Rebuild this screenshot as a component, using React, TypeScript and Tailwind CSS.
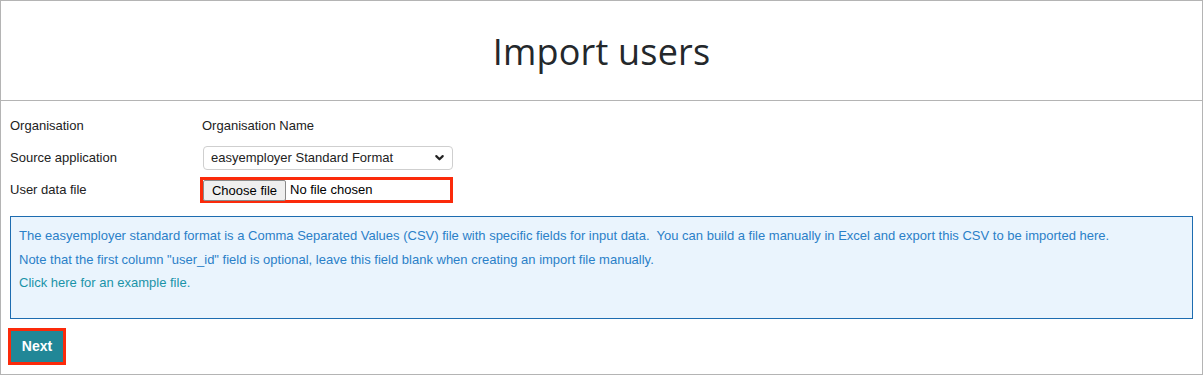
import React from 'react';

const sans = { fontFamily: '"Liberation Sans", Arial, sans-serif' };

function ChevronDown() {
  return (
    <svg width="11" height="11" viewBox="0 0 12 12" fill="none" stroke="#222" strokeWidth="2.4" strokeLinecap="round" strokeLinejoin="round">
      <path d="M2.5 4.5 6 8l3.5-3.5" />
    </svg>
  );
}

export default function App() {
  return (
    <div className="bg-white w-[1204px] h-[376px]">
      <div className="w-[1203px] h-[375px] border border-[#b4b4b4] flex flex-col text-[13px] text-[#222]" style={sans}>
        {/* Page heading */}
        <header className="h-[100px] shrink-0 border-b border-[#b4b4b4] flex items-center justify-center">
          <h1 className="text-[36px] text-[#24282b] font-['Open_Sans',sans-serif] font-normal tracking-[0.2px] pt-[3px]">
            Import users
          </h1>
        </header>

        {/* Form */}
        <div className="px-[9px] pt-[9px]">
          <div className="flex items-center h-[32px]">
            <div className="w-[192px]">Organisation</div>
            <div>Organisation Name</div>
          </div>
          <div className="flex items-center h-[31px]">
            <div className="w-[192px]">Source application</div>
            <div className="w-[250px] h-[24px] ml-[1px] border border-[#cfcfcf] rounded-[4px] flex items-center justify-between pl-[7px] pr-[7px]">
              <span>easyemployer Standard Format</span>
              <ChevronDown />
            </div>
          </div>
          <div className="flex items-center h-[34px]">
            <div className="w-[190px]">User data file</div>
            <div className="w-[253px] h-[26px] border-[3px] border-[#fb2a0a] flex items-center">
              <button className="h-[21px] w-[83px] bg-[#efefef] border border-[#8a8a8a] rounded-[2px] text-[13px] text-black">
                Choose file
              </button>
              <span className="ml-[4px] text-black">No file chosen</span>
            </div>
          </div>

          {/* Info panel */}
          <div className="mt-[9px] h-[103px] border border-[#1d6cb0] bg-[#eaf4fd] px-[8px] pt-[7px] text-[#2a80c8] leading-[23.5px]">
            <p>
              The easyemployer standard format is a Comma Separated Values (CSV) file with specific fields for input data.&nbsp; You can build a file manually in Excel and export this CSV to be imported here.
            </p>
            <p>Note that the first column "user_id" field is optional, leave this field blank when creating an import file manually.</p>
            <p className="text-[#1a93a8]">Click here for an example file.</p>
          </div>

          {/* Action */}
          <div className="mt-[9px] ml-[-2px]">
            <button className="w-[58px] h-[37px] border-[3px] border-[#fb2a0a] bg-[#218797] text-white font-bold text-[14px] flex items-center justify-center">
              Next
            </button>
          </div>
        </div>
      </div>
    </div>
  );
}
